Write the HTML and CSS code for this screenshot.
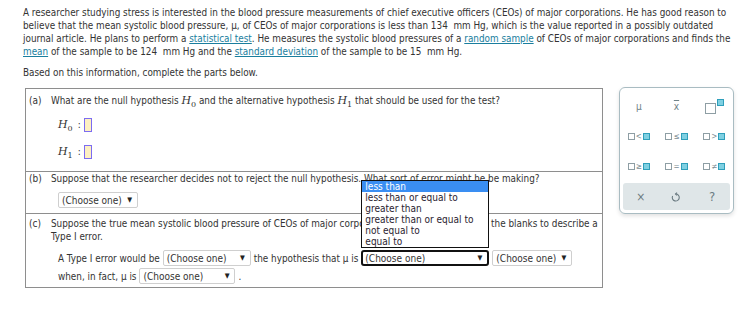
FILE: index.html
```html
<!DOCTYPE html>
<html lang="en">
<head>
    <meta charset="UTF-8">
    <title>Hypothesis test - Type I error</title>
    <link rel="stylesheet" href="styles.css">
</head>
<body>
    <div class="page">
        <p class="intro">A researcher studying stress is interested in the blood pressure measurements of chief executive officers (CEOs) of major corporations. He has good reason to believe that the mean systolic blood pressure, &mu;, of CEOs of major corporations is less than 134&nbsp; mm Hg, which is the value reported in a possibly outdated journal article. He plans to perform a <a href="#">statistical test</a>. He measures the systolic blood pressures of a <a href="#">random sample</a> of CEOs of major corporations and finds the <a href="#">mean</a> of the sample to be 124&nbsp; mm Hg and the <a href="#">standard deviation</a> of the sample to be 15&nbsp; mm Hg.</p>
        <p class="prompt">Based on this information, complete the parts below.</p>

        <div class="work">
            <div class="parts">
                <div class="part part-a">
                    <span class="tag">(a)</span>
                    <div class="body">
                        <p class="question">What are the null hypothesis <span class="math">H<sub>0</sub></span> and the alternative hypothesis <span class="math">H<sub>1</sub></span> that should be used for the test?</p>
                        <div class="hyp"><span class="math">H<sub>0</sub></span> <span class="colon">:</span><span class="blank"></span></div>
                        <div class="hyp"><span class="math">H<sub>1</sub></span> <span class="colon">:</span><span class="blank"></span></div>
                    </div>
                </div>

                <div class="part part-b">
                    <span class="tag">(b)</span>
                    <div class="body">
                        <p class="question">Suppose that the researcher decides not to reject the null hypothesis. What sort of error might he be making?</p>
                        <div class="answer">
                            <span class="select w80">(Choose one)<span class="arrow">&#9660;</span></span>
                        </div>
                    </div>
                </div>

                <div class="part part-c">
                    <span class="tag">(c)</span>
                    <div class="body">
                        <p class="question">Suppose the true mean systolic blood pressure of CEOs of major corporations is 134 mm Hg. Fill in the blanks to describe a<br>Type I error.</p>
                        <div class="fill">
                            A Type I error would be
                            <span class="select w87">(Choose one)<span class="arrow">&#9660;</span></span>
                            the hypothesis that &mu; is
                            <span class="open-wrap">
                                <span class="select focused w128">(Choose one)<span class="arrow">&#9660;</span></span>
                                <span class="options">
                                    <span class="option active">less than</span>
                                    <span class="option">less than or equal to</span>
                                    <span class="option">greater than</span>
                                    <span class="option">greater than or equal to</span>
                                    <span class="option">not equal to</span>
                                    <span class="option">equal to</span>
                                </span>
                            </span>
                            <span class="select w80">(Choose one)<span class="arrow">&#9660;</span></span>
                        </div>
                        <div class="fill">
                            when, in fact, &mu; is
                            <span class="select w96">(Choose one)<span class="arrow">&#9660;</span></span> .
                        </div>
                    </div>
                </div>
            </div>

            <div class="palette">
                <div class="keys">
                    <span class="key">&mu;</span>
                    <span class="key xbar">x</span>
                    <span class="key"><span class="sq big"></span><span class="sq teal sup"></span></span>
                    <span class="key"><span class="sq"></span><span class="op">&lt;</span><span class="sq teal"></span></span>
                    <span class="key"><span class="sq"></span><span class="op">&le;</span><span class="sq teal"></span></span>
                    <span class="key"><span class="sq"></span><span class="op">&gt;</span><span class="sq teal"></span></span>
                    <span class="key"><span class="sq"></span><span class="op">&ge;</span><span class="sq teal"></span></span>
                    <span class="key"><span class="sq"></span><span class="op">=</span><span class="sq teal"></span></span>
                    <span class="key"><span class="sq"></span><span class="op">&ne;</span><span class="sq teal"></span></span>
                </div>
                <div class="actions">
                    <span class="action">&times;</span>
                    <span class="action">
                        <svg width="10" height="11" viewBox="0 0 10 11" fill="none" stroke="#6b7b82" stroke-width="1.1">
                            <path d="M4.6 3 A3.5 3.5 0 1 1 1.6 5"/>
                            <path d="M6 1.6 L4.5 3 L6 4.4"/>
                        </svg>
                    </span>
                    <span class="action help">?</span>
                </div>
            </div>
        </div>
    </div>
</body>
</html>
```

FILE: styles.css
```css
body {
    margin: 0;
    background: #fff;
    color: #333;
    font-family: "DejaVu Sans Condensed", "DejaVu Sans", sans-serif;
    font-size: 9.85px;
}

.page {
    padding: 6px 0 0 23px;
}

.intro {
    margin: 0;
    width: 712px;
    line-height: 13px;
}

.intro a {
    color: #1a7e9e;
    text-decoration: underline;
}

.prompt {
    margin: 8px 0 0;
    line-height: 13px;
}

.work {
    display: flex;
    align-items: flex-start;
    margin-top: 9px;
}

/* question box */
.parts {
    margin-left: 2px;
    width: 576px;
    border: 1px solid #8e8e8e;
}

.part {
    display: flex;
    border-top: 1px solid #8e8e8e;
}

.part:first-child {
    border-top: 0;
}

.tag {
    width: 22px;
    padding: 0 0 0 3px;
    line-height: 13px;
    font-size: 10px;
}

.body {
    flex: 1;
}

.question {
    margin: 0;
    line-height: 13px;
}

.part-a {
    padding: 5px 0 6px;
}

.hyp {
    height: 27px;
    display: flex;
    align-items: center;
    padding-left: 7px;
}

.hyp:first-of-type {
    margin-top: 4px;
}

.math {
    font-family: "DejaVu Serif", serif;
    font-style: italic;
    font-size: 11px;
}

.math sub {
    font-size: 8px;
    font-style: normal;
    vertical-align: -3px;
    line-height: 0;
}

.colon {
    margin: 0 3px 0 5px;
}

.blank {
    display: inline-block;
    width: 6px;
    height: 12px;
    border: 1px solid #7c6cf2;
    background: #fdf0c2;
}

.part-b {
    padding: 0 0 5px;
}

.answer {
    display: flex;
    padding: 7px 0 0 7px;
}

.part-c {
    padding: 3px 0 2px;
}

.fill {
    padding-left: 7px;
    height: 18px;
    display: flex;
    align-items: center;
    gap: 3px;
}

.part-c .question + .fill {
    margin-top: 6px;
}

/* fake select boxes */
.select {
    display: inline-flex;
    align-items: center;
    justify-content: space-between;
    box-sizing: border-box;
    height: 16px;
    padding: 0 5px 0 3px;
    border: 1px solid #cfcfcf;
    border-radius: 2px;
    background: #fff;
    font-size: 10px;
    color: #333;
}

.arrow {
    font-size: 7px;
    color: #222;
}

.w80 { width: 80px; }
.w87 { width: 88px; }
.w96 { width: 96px; }
.w128 { width: 128px; }

.select.focused {
    border: 2px solid #111;
    border-radius: 3px;
    padding-left: 2px;
}

.open-wrap {
    position: relative;
    display: inline-flex;
}

.options {
    position: absolute;
    left: 0;
    bottom: calc(100% + 2px);
    width: 128px;
    box-sizing: border-box;
    border: 1px solid #111;
    background: #fff;
    display: flex;
    flex-direction: column;
    z-index: 2;
}

.option {
    line-height: 11px;
    padding-left: 3px;
    font-size: 10px;
    color: #2a2330;
    white-space: nowrap;
}

.option.active {
    background: #3a8ef2;
    color: #fff;
}

/* symbol palette */
.palette {
    margin-left: 16px;
    margin-top: -1px;
    width: 113px;
    border: 1px solid #a9bcc2;
    border-radius: 6px;
    box-shadow: 0 2px 4px rgba(0, 0, 0, 0.12);
    padding: 3px 0 3px;
}

.keys {
    display: grid;
    grid-template-columns: repeat(3, 1fr);
    grid-auto-rows: 30px;
}

.key {
    display: flex;
    align-items: center;
    justify-content: center;
    color: #6f8288;
    font-size: 10px;
}

.xbar {
    text-decoration: overline;
}

.sq {
    display: inline-block;
    width: 5px;
    height: 5px;
    border: 1px solid #8e9ea4;
    background: #fff;
}

.sq.teal {
    border-color: #2f9fbb;
    background: #7fd0e2;
}

.sq.big {
    width: 9px;
    height: 9px;
    margin-top: 5px;
}

.sq.sup {
    margin-top: -8px;
    margin-left: 1px;
}

.op {
    font-size: 8px;
    margin: 0 1px;
    color: #7b8d93;
}

.actions {
    margin: 2px 3px 0;
    height: 27px;
    background: #dfe6e8;
    border-radius: 3px;
    display: grid;
    grid-template-columns: repeat(3, 1fr);
}

.action {
    display: flex;
    align-items: center;
    justify-content: center;
    color: #6b7b82;
    font-size: 12px;
}

.action.help {
    font-size: 13px;
}
```
